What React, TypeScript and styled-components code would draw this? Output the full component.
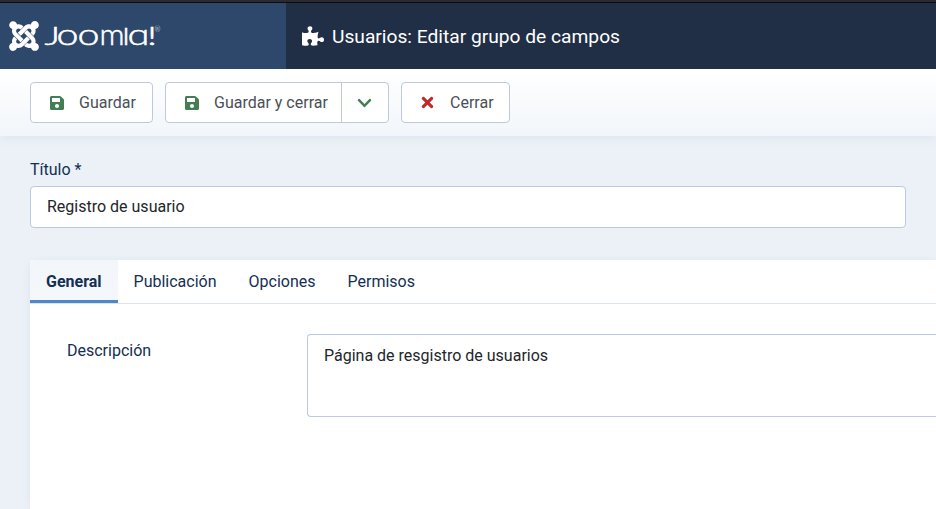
import React from "react";
import styled, { createGlobalStyle } from "styled-components";
import { FaChevronDown, FaJoomla, FaPuzzlePiece, FaSave, FaTimes } from "react-icons/fa";

const GlobalStyle = createGlobalStyle`
  *, *::before, *::after { box-sizing: border-box; }
  body {
    margin: 0;
    overflow: hidden;
    background: #ebf1f6;
    color: #132f53;
    font: 400 16px/24px Roboto, "Noto Sans", sans-serif;
  }
`;

const Page = styled.div`
  display: flex;
  flex-direction: column;
  width: 100%;
  height: 100vh;
  overflow: hidden;
`;

const BrowserEdge = styled.div`
  flex: none;
  height: 3px;
  background: #2b2a33;
  border-bottom: 1px solid #0c0c0d;
`;

const Header = styled.header`
  flex: none;
  display: flex;
  height: 66px;
  background: #202f45;
  color: #fff;
  position: relative;
  z-index: 1;
`;

const Brand = styled.div`
  flex: none;
  display: flex;
  align-items: center;
  width: 286px;
  padding-left: 9px;
  background: #2e486b;
`;

const JoomlaMark = styled(FaJoomla)`
  width: 30px;
  height: 34px;
  flex: none;
`;

const Wordmark = styled.svg`
  width: 118px;
  height: 34px;
  margin-left: 5px;
  overflow: visible;
  fill: #fff;
  stroke: #fff;
  stroke-width: 0.5;
  font-family: Lato, sans-serif;
  font-weight: 300;
`;

const PageTitle = styled.h1`
  display: flex;
  align-items: center;
  gap: 8px;
  margin: 0;
  padding: 1px 0 0 16px;
  font-size: 19.2px;
  line-height: 24px;
  font-weight: 400;
  white-space: nowrap;
`;

const PuzzleIcon = styled(FaPuzzlePiece)`
  width: 22px;
  height: 20px;
  margin-bottom: 2px;
`;

const Toolbar = styled.div`
  flex: none;
  display: flex;
  gap: 12px;
  height: 67px;
  padding: 13px 30px 0;
  background: linear-gradient(#fff, #f2f6fa);
  box-shadow: 0 2px 8px #dde5f0;
`;

const ButtonGroup = styled.div`
  display: flex;
  height: 41px;
  border: 1px solid #bfc9da;
  border-radius: 4px;
  background: #fff;
  overflow: hidden;
`;

const Button = styled.button<{ $tone: string; $width: number }>`
  display: flex;
  align-items: center;
  width: ${(p) => p.$width}px;
  padding: 0 0 0 19px;
  border: 0;
  background: none;
  color: #495057;
  font: inherit;
  white-space: nowrap;

  svg { flex: none; width: 14px; height: 16px; margin-right: 15px; color: ${(p) => p.$tone}; }
  & + & { padding-left: 15px; border-left: 1px solid #bfc9da; }
`;

const CloseIcon = styled(FaTimes)`
  && { width: 13px; height: 17px; margin-right: 16px; }
`;

const ChevronIcon = styled(FaChevronDown)`
  && { width: 15px; height: 16px; margin: 0; }
`;

const Content = styled.main`
  flex: 1;
  display: flex;
  flex-direction: column;
  padding: 22px 30px 0;
`;

const Label = styled.label`
  display: block;
`;

const TitleInput = styled.input`
  flex: none;
  width: 100%;
  height: 42px;
  margin-top: 4px;
  padding: 0 16px 1px;
  border: 1px solid #b8c9e0;
  border-radius: 4px;
  background: #fff;
  color: #22262a;
  font: inherit;
  outline: none;
`;

const Card = styled.section`
  flex: 1;
  margin: 32px -30px 0 0;
  background: #fff;
  box-shadow: 0 2px 10px -4px #c3cfdf;
`;

const Tabs = styled.div`
  display: flex;
  height: 44px;
  border-bottom: 1px solid #d9e2ed;
`;

const Tab = styled.button<{ $active?: boolean }>`
  height: 43px;
  padding: 0 16px;
  border: 0;
  color: #132f53;
  background: ${(p) => (p.$active ? "linear-gradient(#f2f6fa, #f4f8fb)" : "none")};
  box-shadow: ${(p) => (p.$active ? "inset 0 -3px #5087c9" : "none")};
  font: inherit;
  font-weight: ${(p) => (p.$active ? 700 : 400)};
`;

const FieldRow = styled.div`
  display: grid;
  grid-template-columns: 240px 1fr;
  align-items: start;
  padding: 30px 0 0 37px;

  ${Label} { padding-top: 5px; }
`;

const Description = styled.textarea`
  width: 100%;
  height: 83px;
  padding: 9px 16px;
  border: 1px solid #b8c9e0;
  border-right: 0;
  border-radius: 4px 0 0 4px;
  color: #22262a;
  font: inherit;
  resize: none;
  outline: none;
  display: block;
`;

const tabs = ["General", "Publicación", "Opciones", "Permisos"];

const brandLetters = [
  { glyph: "J", x: 0.5, size: 25, width: 15.5 },
  { glyph: "o", x: 12.5, size: 29, width: 22 },
  { glyph: "o", x: 33.5, size: 29, width: 22 },
  { glyph: "m", x: 55.5, size: 29, width: 25 },
  { glyph: "l", x: 78.5, size: 24, width: 7 },
  { glyph: "ɑ", x: 83.5, size: 29, width: 22 },
  { glyph: "!", x: 103, size: 25, width: 10 },
];

export default function App() {
  return (
    <>
      <GlobalStyle />
      <Page>
        <BrowserEdge />
        <Header>
          <Brand>
            <JoomlaMark />
            <Wordmark viewBox="0 0 118 34" role="img" aria-label="Joomla!">
              {brandLetters.map((l) => (
                <text key={l.x} x={l.x} y="26.4" fontSize={l.size} textLength={l.width} lengthAdjust="spacingAndGlyphs">
                  {l.glyph}
                </text>
              ))}
              <text x="110.5" y="13" fontSize="7" strokeWidth="0">®</text>
            </Wordmark>
          </Brand>
          <PageTitle>
            <PuzzleIcon />
            Usuarios: Editar grupo de campos
          </PageTitle>
        </Header>
        <Toolbar>
          <ButtonGroup>
            <Button $tone="#457d54" $width={121}><FaSave />Guardar</Button>
          </ButtonGroup>
          <ButtonGroup>
            <Button $tone="#457d54" $width={175}><FaSave />Guardar y cerrar</Button>
            <Button $tone="#457d54" $width={47} aria-label="Más opciones"><ChevronIcon /></Button>
          </ButtonGroup>
          <ButtonGroup>
            <Button $tone="#c52827" $width={107}><CloseIcon />Cerrar</Button>
          </ButtonGroup>
        </Toolbar>
        <Content>
          <Label htmlFor="title">Título *</Label>
          <TitleInput id="title" defaultValue="Registro de usuario" />
          <Card>
            <Tabs>
              {tabs.map((name, i) => (
                <Tab key={name} $active={i === 0}>{name}</Tab>
              ))}
            </Tabs>
            <FieldRow>
              <Label htmlFor="description">Descripción</Label>
              <Description id="description" defaultValue="Página de resgistro de usuarios" />
            </FieldRow>
          </Card>
        </Content>
      </Page>
    </>
  );
}
